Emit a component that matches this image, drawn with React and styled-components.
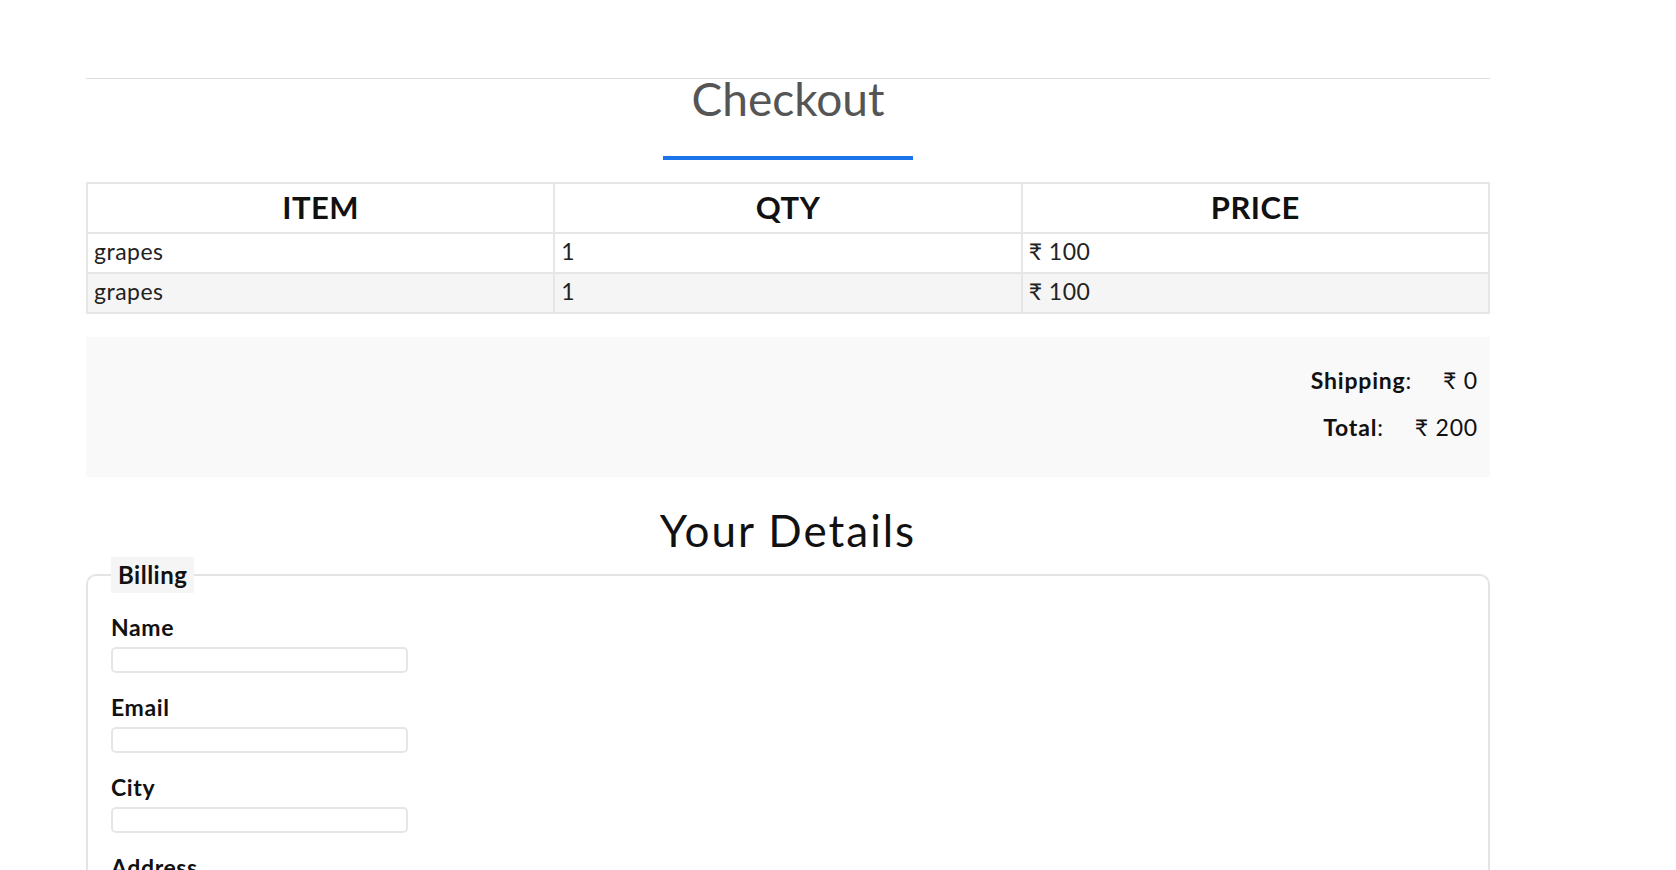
import React from "react";
import styled, { createGlobalStyle } from "styled-components";

const GlobalStyle = createGlobalStyle`
  html, body { margin: 0; padding: 0; background: #ffffff; }
  body {
    font-family: Lato, "Noto Sans", "Liberation Sans", sans-serif;
    color: #111111;
  }
`;

const Page = styled.main`
  width: 1404px;
  margin-left: 86px;
  padding-top: 78px;
  padding-bottom: 40px;
`;

const TopRule = styled.hr`
  margin: 0;
  border: 0;
  border-top: 1px solid #dedede;
`;

const Title = styled.h1`
  margin: 0;
  text-align: center;
  font-size: 46px;
  font-weight: 400;
  line-height: 40px;
  color: #555555;
`;

const Underline = styled.div`
  width: 250px;
  height: 4px;
  margin: 37px auto 0;
  background: #1a73e8;
`;

const Table = styled.table`
  width: 100%;
  margin-top: 22px;
  border-collapse: collapse;
  table-layout: fixed;
`;

const Th = styled.th`
  box-sizing: border-box;
  height: 50px;
  padding: 0 8px 3px;
  border: 2px solid #e6e6e6;
  font-size: 31px;
  font-weight: 700;
  letter-spacing: 0.5px;
  text-transform: uppercase;
  text-align: center;
  color: #111;
`;

const Row = styled.tr`
  background: ${(p) => (p.$striped ? "#f5f5f5" : "#ffffff")};
`;

const Td = styled.td`
  box-sizing: border-box;
  height: 40px;
  padding: 0 6px 4px;
  border: 2px solid #e6e6e6;
  font-size: 23px;
  letter-spacing: 0.5px;
  color: #222;
  text-align: left;
`;

const Summary = styled.section`
  margin-top: 23px;
  padding: 19px 12px 27px;
  background: #f9f9f9;
  display: flex;
  flex-direction: column;
  align-items: flex-end;
`;

const SummaryRow = styled.div`
  display: flex;
  align-items: center;
  gap: 31px;
  height: 47px;
  font-size: 23px;
  letter-spacing: 0.8px;
`;

const SummaryLabel = styled.span`
  font-weight: 700;
  color: #111;
`;

const Colon = styled.span`
  font-weight: 400;
`;

const SummaryValue = styled.span`
  font-weight: 400;
  color: #111;
`;

const DetailsTitle = styled.h2`
  margin: 27px 0 0;
  text-align: center;
  font-size: 44px;
  font-weight: 400;
  letter-spacing: 2px;
  line-height: 1.2;
  color: #111;
`;

const Fieldset = styled.fieldset`
  margin: 0;
  min-width: 0;
  border: 2px solid #e4e4e4;
  border-radius: 10px;
  padding: 21px 23px 30px;
`;

const Legend = styled.legend`
  padding: 0 7px;
  background: #f5f5f5;
  font-size: 24px;
  font-weight: 700;
  letter-spacing: 0.5px;
  line-height: 36px;
  color: #111;
`;

const Field = styled.div`
  display: flex;
  flex-direction: column;
  align-items: flex-start;
  margin-bottom: 21px;
`;

const Label = styled.label`
  display: block;
  font-size: 23px;
  font-weight: 700;
  letter-spacing: 0.6px;
  line-height: 26px;
  margin-bottom: 7px;
  color: #111;
`;

const Input = styled.input`
  display: block;
  box-sizing: border-box;
  width: 297px;
  height: 26px;
  border: 2px solid #e6e6e6;
  border-radius: 5px;
  background: #fff;
  padding: 0 6px;
  font-family: inherit;
  font-size: 15px;
  outline: none;
`;

const items = [
  { name: "grapes", qty: 1, price: 100 },
  { name: "grapes", qty: 1, price: 100 },
];

const fields = ["Name", "Email", "City", "Address", "State", "Zip"];

export default function App() {
  const total = items.reduce((s, i) => s + i.qty * i.price, 0);
  return (
    <>
      <GlobalStyle />
      <Page>
        <TopRule />
        <Title>Checkout</Title>
        <Underline />
        <Table>
          <thead>
            <tr>
              <Th>Item</Th>
              <Th>Qty</Th>
              <Th>Price</Th>
            </tr>
          </thead>
          <tbody>
            {items.map((it, i) => (
              <Row key={i} $striped={i % 2 === 1}>
                <Td>{it.name}</Td>
                <Td>{it.qty}</Td>
                <Td>₹ {it.price}</Td>
              </Row>
            ))}
          </tbody>
        </Table>
        <Summary>
          <SummaryRow>
            <SummaryLabel>
              Shipping<Colon>:</Colon>
            </SummaryLabel>
            <SummaryValue>₹ 0</SummaryValue>
          </SummaryRow>
          <SummaryRow>
            <SummaryLabel>
              Total<Colon>:</Colon>
            </SummaryLabel>
            <SummaryValue>₹ {total}</SummaryValue>
          </SummaryRow>
        </Summary>
        <DetailsTitle>Your Details</DetailsTitle>
        <Fieldset>
          <Legend>Billing</Legend>
          {fields.map((f) => (
            <Field key={f}>
              <Label htmlFor={f.toLowerCase()}>{f}</Label>
              <Input id={f.toLowerCase()} type="text" />
            </Field>
          ))}
        </Fieldset>
      </Page>
    </>
  );
}
